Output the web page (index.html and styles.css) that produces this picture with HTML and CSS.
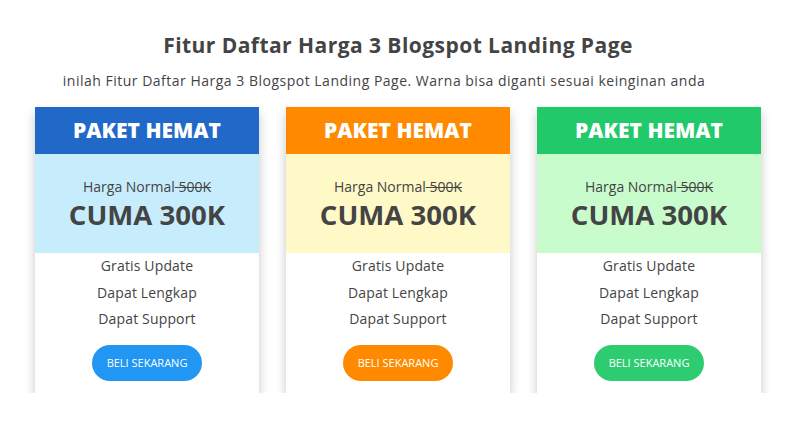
FILE: index.html
```html
<!DOCTYPE html>
<html lang="id">
<head>
<meta charset="utf-8">
<title>Fitur Daftar Harga</title>
<link rel="stylesheet" href="styles.css">
</head>
<body>
<div class="page">
  <h1 class="title">Fitur Daftar Harga 3 Blogspot Landing Page</h1>
  <p class="subtitle">inilah Fitur Daftar Harga 3 Blogspot Landing Page. Warna bisa diganti sesuai keinginan anda</p>
  <div class="cards">
    <div class="card blue">
      <div class="card-head">PAKET HEMAT</div>
      <div class="card-price">
        <div class="normal">Harga Normal<s> 500K</s></div>
        <div class="now">CUMA 300K</div>
      </div>
      <ul class="features">
        <li>Gratis Update</li>
        <li>Dapat Lengkap</li>
        <li>Dapat Support</li>
      </ul>
      <a class="btn" href="#">BELI SEKARANG</a>
    </div>
    <div class="card orange">
      <div class="card-head">PAKET HEMAT</div>
      <div class="card-price">
        <div class="normal">Harga Normal<s> 500K</s></div>
        <div class="now">CUMA 300K</div>
      </div>
      <ul class="features">
        <li>Gratis Update</li>
        <li>Dapat Lengkap</li>
        <li>Dapat Support</li>
      </ul>
      <a class="btn" href="#">BELI SEKARANG</a>
    </div>
    <div class="card green">
      <div class="card-head">PAKET HEMAT</div>
      <div class="card-price">
        <div class="normal">Harga Normal<s> 500K</s></div>
        <div class="now">CUMA 300K</div>
      </div>
      <ul class="features">
        <li>Gratis Update</li>
        <li>Dapat Lengkap</li>
        <li>Dapat Support</li>
      </ul>
      <a class="btn" href="#">BELI SEKARANG</a>
    </div>
  </div>
</div>
</body>
</html>
```

FILE: styles.css
```css
* { box-sizing: border-box; }
html, body { margin: 0; padding: 0; background: #fff; }
body {
  font-family: "Open Sans", "DejaVu Sans", sans-serif;
  color: #444;
}
.page {
  width: 796px;
  padding-top: 31px;
}
.title {
  margin: 0;
  text-align: center;
  font-size: 21px;
  line-height: 28px;
  letter-spacing: 0.45px;
  font-weight: 700;
  color: #444;
}
.subtitle {
  margin: 13px 0 0 0;
  padding-right: 28px;
  text-align: center;
  font-size: 14px;
  line-height: 18px;
  letter-spacing: 0.5px;
  color: #444;
}
.cards {
  display: flex;
  justify-content: center;
  gap: 27px;
  margin-top: 17px;
}
.card {
  width: 224px;
  background: #fff;
  box-shadow: 0 6px 10px rgba(0,0,0,0.22);
  display: flex;
  flex-direction: column;
  align-items: center;
  padding-bottom: 12px;
}
.card-head {
  width: 100%;
  height: 47px;
  line-height: 47px;
  text-align: center;
  color: #fff;
  font-size: 21px;
  font-weight: 800;
}
.card-price {
  width: 100%;
  height: 99px;
  padding-top: 25px;
  text-align: center;
}
.normal {
  font-size: 14px;
  line-height: 16px;
  color: #444;
}
.normal s { text-decoration-thickness: 1px; }
.now {
  margin-top: 2px;
  font-size: 27.6px;
  line-height: 34px;
  font-weight: 700;
  color: #444;
}
.features {
  list-style: none;
  margin: 0;
  padding: 0;
  text-align: center;
  font-size: 14px;
  line-height: 26.5px;
  letter-spacing: 0.15px;
  color: #444;
}
.btn {
  display: block;
  margin-top: 12px;
  width: 110px;
  height: 36px;
  line-height: 36px;
  border-radius: 18px;
  text-align: center;
  color: #fff;
  font-size: 11px;
  text-decoration: none;
}
.blue .card-head { background: #2169c8; }
.blue .card-price { background: #c7edfd; }
.blue .btn { background: #2196f3; }
.orange .card-head { background: #ff8a00; }
.orange .card-price { background: #fff8c7; }
.orange .btn { background: #ff8a00; }
.green .card-head { background: #22c96b; }
.green .card-price { background: #c8fccd; }
.green .btn { background: #2ecc71; }
```
